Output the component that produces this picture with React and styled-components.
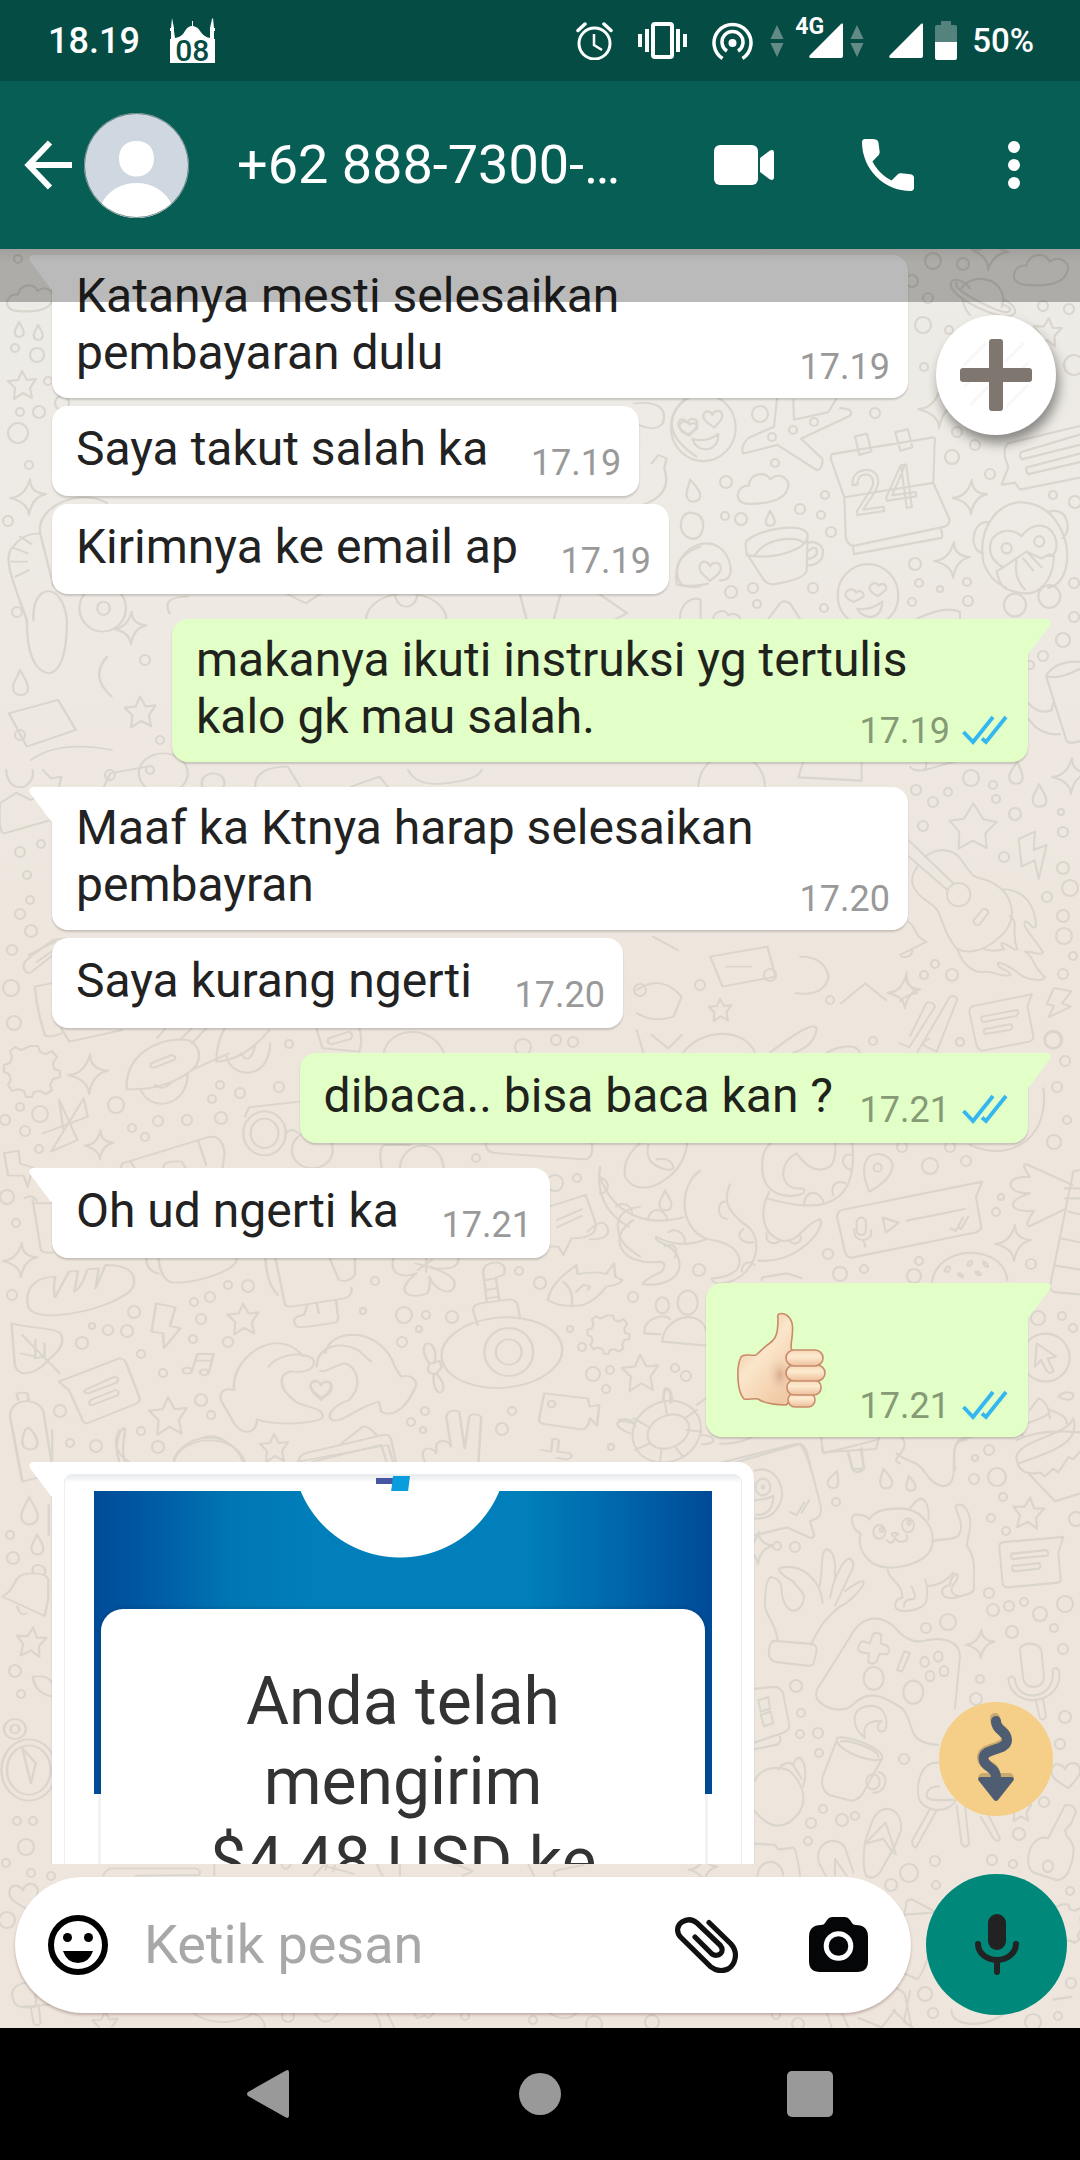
import React from "react";
import styled, { createGlobalStyle, css } from "styled-components";

const GlobalStyle = createGlobalStyle`
  *, *::before, *::after { box-sizing: border-box; }
  body { margin: 0; background: #000; font-family: Roboto, "Noto Sans", sans-serif; }
  button { border: 0; padding: 0; background: none; color: inherit; font: inherit; cursor: pointer; }
  svg { display: block; }
`;

const Screen = styled.div`
  display: flex;
  flex-direction: column;
  height: 100vh;
  overflow: hidden;
`;

/* ---------- status bar ---------- */

const StatusBar = styled.div`
  flex: none;
  display: flex;
  align-items: center;
  height: 81px;
  padding: 0 46px 0 48px;
  background: #054d44;
  color: #fff;
  font-weight: 500;
`;

const Clock = styled.time`
  font-size: 36px;
  line-height: 42px;
`;

const DateBadge = styled.div`
  position: relative;
  margin-left: 30px;
`;

const DateNumber = styled.span`
  position: absolute;
  left: 0;
  right: 0;
  bottom: 0;
  color: #054d44;
  font-size: 30px;
  line-height: 24px;
  text-align: center;
`;

const StatusIcons = styled.div`
  display: flex;
  align-items: center;
  gap: 25px;
  margin-left: auto;
`;

const Signals = styled.div`
  display: flex;
  align-items: center;
  margin-left: -8px;
`;

const Cell = styled.div`
  position: relative;
  margin: 0 7px 0 25px;
`;

const Network = styled.span`
  position: absolute;
  left: -14px;
  top: -8px;
  font-size: 23px;
  line-height: 24px;
  font-weight: 700;
`;

const Battery = styled.div`
  display: flex;
  align-items: center;
  gap: 15px;
  margin-left: -13px;
  font-size: 33px;
  line-height: 40px;
`;

/* ---------- header ---------- */

const Header = styled.header`
  flex: none;
  display: flex;
  align-items: center;
  height: 168px;
  padding: 0 52px 0 24px;
  background: #075e54;
  color: #fff;
`;

const Avatar = styled.div`
  margin-left: 12px;
`;

const Title = styled.h1`
  flex: 1;
  min-width: 0;
  margin: 0 0 0 48px;
  overflow: hidden;
  font-size: 54px;
  line-height: 64px;
  font-weight: 400;
  white-space: nowrap;
`;

const Actions = styled.div`
  display: flex;
  align-items: center;
  gap: 88px;
`;

/* ---------- chat ---------- */

const Chat = styled.div`
  position: relative;
  flex: 1;
  min-height: 0;
  display: flex;
  flex-direction: column;
  background: linear-gradient(#edece7, #eee9e3 350px, #eee6dd 750px);
`;

const Wallpaper = styled.svg`
  position: absolute;
  inset: 0;
  width: 100%;
  height: 100%;
`;

const Messages = styled.main`
  position: relative;
  flex: 1;
  min-height: 0;
  overflow: hidden;
  display: flex;
  flex-direction: column;
  padding: 6px 52px 0;
`;

const HeaderShade = styled.div`
  position: absolute;
  inset: 0 0 auto;
  height: 53px;
  background: linear-gradient(rgba(0, 0, 0, 0.32), rgba(0, 0, 0, 0.27) 14px);
`;

const Bubble = styled.article`
  position: relative;
  flex: none;
  display: grid;
  align-content: center;
  align-self: ${(p) => (p.$sent ? "flex-end" : "flex-start")};
  max-width: calc(100% - 120px);
  min-height: 90px;
  margin-top: ${(p) => (p.$follows ? "8px" : "25px")};
  padding: 12px ${(p) => (p.$sent ? "20px" : "18px")} 17px 24px;
  border-radius: 16px;
  background: ${(p) => (p.$sent ? "#e1ffc7" : "#fff")};
  color: ${(p) => (p.$sent ? "#1f231b" : "#222")};
  box-shadow: 0 2px 2px rgba(0, 0, 0, 0.16);
  ${(p) => p.$tail && (p.$sent ? "border-top-right-radius: 0;" : "border-top-left-radius: 0;")}
  &:first-child { margin-top: 0; }
`;

const Tail = styled.svg`
  position: absolute;
  top: 0;
  ${(p) => (p.$sent ? css`left: 100%; transform: scaleX(-1);` : css`right: 100%;`)}
`;

const Words = styled.p`
  grid-area: 1 / 1;
  margin: 0;
  padding-right: 16px;
  font-size: 48px;
  line-height: 57px;
  overflow-wrap: break-word;

  &::after {
    content: "";
    display: inline-block;
    width: ${(p) => (p.$sent ? "159px" : "117px")};
  }
`;

const Emoji = styled.div`
  grid-area: 1 / 1;
  padding-right: 172px;
`;

const Meta = styled.footer`
  grid-area: 1 / 1;
  place-self: end;
  display: flex;
  align-items: flex-end;
  gap: 12px;
  color: ${(p) => (p.$sent ? "#869a76" : "#999")};
  font-size: 36px;
  line-height: 28px;
`;

const PictureBubble = styled(Bubble)`
  display: block;
  width: 702px;
  padding: 12px;
`;

const Picture = styled.div`
  position: relative;
  overflow: hidden;
  padding: 16px 29px 0;
  border: 1px solid #eceeef;
  border-radius: 8px;
  background: linear-gradient(#e9ebed, #fff 8px);
`;

const Receipt = styled.div`
  position: relative;
  padding: 118px 7px 0;
  background:
    radial-gradient(circle 108px at calc(50% - 3px) -41px, #fff 107px, transparent 108px),
    linear-gradient(90deg, #004b98, #0060a8 12%, #0076b3 22%, #007fba 35%, #007fba 70%, #0068ac 84%, #004a97);
  background-size: 100% 303px;
  background-repeat: no-repeat;
`;

const Logo = styled.svg`
  position: absolute;
  left: 50%;
  top: 0;
  margin-left: -27px;
`;

const ReceiptCard = styled.div`
  padding: 53px 60px 40px;
  border-radius: 22px;
  background: #fff;
  box-shadow: 0 0 0 3px rgba(0, 0, 0, 0.05);
  color: #333;
  font-size: 66px;
  line-height: 80px;
  text-align: center;
`;

const Round = styled.button`
  display: grid;
  place-items: center;
  border-radius: 50%;
  width: ${(p) => p.$size}px;
  height: ${(p) => p.$size}px;
  background: ${(p) => p.$color};
`;

const AddButton = styled(Round)`
  position: absolute;
  right: 24px;
  top: 66px;
  box-shadow: 3px 8px 12px rgba(0, 0, 0, 0.42);
`;

const DownButton = styled(Round)`
  position: absolute;
  right: 27px;
  bottom: 212px;
`;

/* ---------- composer ---------- */

const Composer = styled.form`
  position: relative;
  flex: none;
  display: flex;
  align-items: center;
  gap: 15px;
  padding: 10px 13px 13px 15px;
`;

const Field = styled.div`
  flex: 1;
  min-width: 0;
  display: flex;
  align-items: center;
  height: 136px;
  padding: 0 43px 0 33px;
  border-radius: 68px;
  background: #fff;
  box-shadow: 0 2px 3px rgba(60, 0, 0, 0.25);
`;

const Input = styled.input`
  flex: 1;
  min-width: 0;
  height: 80px;
  margin: 0 24px 0 36px;
  padding: 0;
  border: 0;
  outline: 0;
  background: transparent;
  color: #222;
  font: 400 54px/64px Roboto, "Noto Sans", sans-serif;
  &::placeholder { color: #a8a8a8; opacity: 1; }
`;

const FieldActions = styled.div`
  display: flex;
  align-items: center;
  gap: 70px;
`;

/* ---------- system navigation ---------- */

const NavBar = styled.nav`
  flex: none;
  display: grid;
  grid-template-columns: repeat(3, 1fr);
  place-items: center;
  height: 132px;
  padding: 0 12.5%;
  background: #000;
`;

/* ---------- drawings ---------- */

const Arrows = () => (
  <svg width="14" height="32" viewBox="0 0 14 32" fill="#648a85">
    <path d="M7 0l6.500 14H.5zM7 32L.5 18h13z" />
  </svg>
);

const SignalIcon = () => (
  <svg width="34" height="35" viewBox="0 0 34 35" fill="#fff">
    <path d="M32.500.6Q34 0 34 1.500V33q0 2-2 2H1.500Q-.6 34.500.6 32.500z" />
  </svg>
);

const Ticks = () => (
  <svg width="46" height="30" viewBox="0 0 46 30" fill="none" stroke="#34b7f1" strokeWidth="3.800">
    <path d="M1.500 17L11 27 31 2M20 23.500l4 3.500L44 2" />
  </svg>
);

const ThumbsUp = () => (
  <svg width="106" height="125" viewBox="0 0 106 125" role="img" aria-label="👍🏻">
    <defs>
      <linearGradient id="palm" x1="0" y1=".2" x2=".6" y2="1">
        <stop offset="0" stopColor="#efc49e" />
        <stop offset=".45" stopColor="#fbe6ca" />
        <stop offset="1" stopColor="#f1cba7" />
      </linearGradient>
      <radialGradient id="fold">
        <stop offset="0" stopColor="#d9ab8c" />
        <stop offset="1" stopColor="#f6dcbf" stopOpacity="0" />
      </radialGradient>
      <linearGradient id="finger" x1="0" y1="0" x2="0" y2="1">
        <stop offset="0" stopColor="#f6d7b7" />
        <stop offset=".4" stopColor="#fdebd0" />
        <stop offset="1" stopColor="#edbf9b" />
      </linearGradient>
    </defs>
    <g stroke="#c98a69" strokeWidth="1.600">
      <path fill="url(#palm)" d="M49 19c5-2 11 2 13 9 2 9-1 16-1 25 6 8 8 48-5 57-10 0-21-1-28-6-6-1-8 1-14 0-7-7-8-32-3-42 3-4 9-1 15-2 6-5 8-8 14-12 7-5 8-12 8-25q-1-3 1-4z" />
      <ellipse cx="50" cy="80" rx="14" ry="20" fill="url(#fold)" stroke="none" />
      <rect x="58" y="98" width="27" height="14" rx="7" fill="url(#finger)" />
      <rect x="57" y="85" width="34" height="15" rx="7" fill="url(#finger)" />
      <rect x="56" y="70" width="39" height="16" rx="8" fill="url(#finger)" />
      <rect x="56" y="55" width="37" height="16" rx="8" fill="url(#finger)" />
    </g>
  </svg>
);

const STAR = "M0-14L5-5 14-6 8 3 10 13 1 8-8 14-7 3-14-4-4-5z";
const SPARKLE = "M2-18Q2-4 18-3Q4 0 1 18Q0 5-18 1Q-3 0 2-18z";
const HEART = "M0 12C-8 5-14 0-11-6S-2-9 0-4C3-10 11-9 12-3S6 7 0 12z";
const DROP = "M0-12C4-4 8 0 8 6S4 13 0 13-7 10-7 5-3-4 0-12z";
const GEAR = "M-4-22h8l2 6 6 2 6-3 5 6-4 6 1 6 6 2v6l-7 2-3 6 2 5-6 4-6-3-6 1-2 5h-6l-2-6-6-2-6 2-4-6 3-5-2-6-5-2v-7l6-2 2-6-2-6 5-4 6 3 5-2z";
const CLOUD = "M-18 12C-34 10-28-8-16-6-12-20 4-18 6-10 18-18 28-6 22 2 18 12 0 14-18 12z";

/* [shape, x, y, scale, rotation] */
const STAMPS = [
  [STAR, 22, 385, 1, 0], [SPARKLE, 28, 497, 1, 0], [CLOUD, 32, 300, .9, 0], [DROP, 19, 329, .6, 0], [DROP, 38, 332, .6, 0],
  [CLOUD, 1043, 272, 1.05, 0], [SPARKLE, 990, 252, 1, 10], [STAR, 1047, 332, 1, 8], [SPARKLE, 938, 408, 1.1, 0],
  [CLOUD, 765, 490, 1, -6], [DROP, 692, 490, .9, -10], [DROP, 770, 518, .6, 0], [SPARKLE, 970, 497, .95, 0], [SPARKLE, 952, 560, 1, 0],
  [SPARKLE, 1070, 776, 1, 0], [DROP, 1016, 772, .9, 6], [DROP, 1039, 795, .9, 0], [HEART, 710, 570, .9, 0], [HEART, 688, 426, .8, -8], [HEART, 713, 418, .8, -8],
  [GEAR, 34, 1068, 1, 0], [SPARKLE, 88, 1074, 1.1, 0], [SPARKLE, 99, 1145, .8, 0], [SPARKLE, 20, 1260, .95, 0],
  [STAR, 243, 1319, 1.1, 0], [STAR, 168, 1416, 1.35, 0], [STAR, 274, 1448, 1, 0], [HEART, 321, 1389, .9, 0],
  [GEAR, 610, 1332, .75, 0], [STAR, 640, 1373, 1.3, 0], [SPARKLE, 1013, 1243, 1, 0],
  [DROP, 29, 1510, 1.1, 0], [DROP, 37, 1544, .8, 0], [STAR, 31, 1642, 1.05, 8], [DROP, 834, 1479, .7, 20], [DROP, 885, 1478, .8, -10], [DROP, 910, 1483, .6, -10],
  [STAR, 1028, 1513, 1.1, 8], [SPARKLE, 980, 1644, .8, 0], [HEART, 1066, 1774, 1.2, -10], [STAR, 1020, 1810, .8, 0],
  [HEART, 24, 1895, 1.2, -12], [SPARKLE, 703, 1869, .8, 0], [GEAR, 1065, 1922, .8, 0], [STAR, 105, 2024, .9, 0],
  [SPARKLE, 757, 1548, .9, 0], [SPARKLE, 904, 992, .9, 0],
  [DROP, 20, 682, 1, 0], [STAR, 140, 712, 1.1, 0], [SPARKLE, 130, 628, .9, 0],
  [DROP, 665, 1200, .8, 0], [STAR, 720, 1010, .8, 0],
];

/* small rings scattered between the larger doodles: [x, y, r] */
const RINGS = [
  [18, 259, 4], [15, 348, 4], [37, 355, 7], [48, 381, 4], [20, 412, 4], [39, 412, 6], [18, 433, 10], [29, 465, 4], [8, 521, 5], [62, 403, 7], [17, 612, 5],
  [933, 261, 8], [963, 264, 6], [912, 281, 6], [928, 298, 5], [923, 325, 8], [949, 330, 4], [924, 367, 4], [1043, 306, 5], [1069, 309, 5], [1074, 365, 10],
  [760, 414, 8], [814, 422, 4], [793, 430, 4], [875, 413, 5], [772, 437, 4], [775, 463, 4], [957, 432, 5], [975, 445, 5], [952, 457, 7], [990, 474, 5],
  [726, 482, 6], [725, 516, 4], [741, 519, 6], [800, 509, 5], [825, 495, 4], [821, 515, 4], [831, 532, 5], [813, 588, 5], [753, 588, 5], [731, 592, 6], [757, 604, 4],
  [824, 608, 4], [915, 564, 6], [919, 583, 4], [940, 589, 3], [967, 582, 4], [968, 601, 5], [912, 602, 4], [1053, 495, 4], [1075, 502, 6], [1074, 583, 5], [1074, 617, 5], [1063, 640, 7], [1043, 656, 5], [1030, 665, 4],
  [20, 852, 5], [41, 844, 4], [27, 875, 4], [30, 900, 4], [20, 914, 5], [31, 931, 6], [12, 950, 5], [11, 988, 8], [14, 1023, 7],
  [116, 1105, 8], [40, 1114, 8], [20, 1107, 4], [5, 1120, 5], [25, 1131, 5], [39, 1149, 4], [132, 1128, 4], [145, 1137, 4], [158, 1121, 5], [187, 1120, 5], [221, 1118, 6],
  [212, 1099, 4], [220, 1085, 4], [240, 1093, 5], [279, 1087, 5], [289, 1044, 4], [523, 1047, 8], [556, 1040, 5], [573, 1042, 5], [555, 1183, 8], [577, 1178, 4], [476, 1158, 4], [7, 1197, 7], [16, 1223, 4],
  [12, 1295, 5], [82, 1343, 6], [92, 1326, 3], [108, 1330, 5], [127, 1331, 6], [134, 1312, 6], [141, 1354, 4], [163, 1373, 4], [194, 1302, 4], [210, 1297, 5], [228, 1285, 4],
  [248, 1286, 6], [201, 1319, 5], [193, 1339, 4], [228, 1342, 5], [201, 1400, 6], [60, 1411, 6], [70, 1443, 4], [96, 1446, 6], [158, 1447, 6], [141, 1431, 4], [211, 1415, 4],
  [375, 1281, 4], [363, 1311, 3], [404, 1315, 8], [426, 1315, 4], [452, 1317, 6], [402, 1342, 5], [419, 1329, 3], [519, 1271, 4], [540, 1283, 6], [633, 1297, 5], [699, 1270, 6], [570, 1329, 3],
  [582, 1347, 4], [593, 1374, 7], [610, 1370, 4], [606, 1389, 4], [675, 1368, 4], [686, 1376, 5], [512, 1411, 4], [502, 1429, 6], [425, 1411, 4], [411, 1422, 4], [423, 1430, 3], [611, 1447, 3],
  [873, 1041, 4], [960, 1042, 4], [1053, 1040, 8], [1065, 1061, 5], [1057, 1087, 5], [1067, 1120, 4], [1054, 1142, 7], [930, 1166, 8], [902, 1147, 5], [950, 1147, 5], [966, 1161, 5], [996, 1212, 4],
  [1001, 1197, 3], [828, 1254, 5], [840, 1274, 7], [864, 1269, 4], [914, 1276, 7], [919, 1261, 4], [1031, 1264, 5], [1038, 1318, 7], [1062, 1316, 4], [1073, 1328, 4],
  [975, 1458, 3], [989, 1450, 5], [974, 1479, 5], [997, 1477, 9], [1003, 1497, 4], [991, 1518, 4], [1006, 1531, 4], [1076, 1519, 7], [836, 1502, 4], [777, 1546, 4], [795, 1547, 5],
  [989, 1593, 5], [993, 1610, 6], [1009, 1606, 5], [1024, 1602, 4], [1040, 1614, 7], [1065, 1604, 8], [1054, 1628, 4], [1012, 1632, 6], [948, 1622, 8], [926, 1628, 5], [1063, 1649, 5], [980, 1679, 4], [976, 1699, 6],
  [1065, 1717, 6], [1060, 1744, 5], [796, 1686, 6], [801, 1713, 4], [800, 1734, 4], [818, 1733, 5], [819, 1753, 4], [904, 1759, 5], [823, 1809, 4], [811, 1823, 5], [842, 1820, 6], [855, 1816, 4], [808, 1841, 4],
  [1044, 1802, 5], [1019, 1834, 6], [935, 1861, 5], [992, 1860, 5], [1013, 1864, 4], [909, 1873, 9], [891, 1885, 6], [936, 1885, 4], [1070, 1891, 4], [925, 1994, 7], [933, 2013, 5], [1071, 1983, 5], [1058, 2016, 4], [1033, 2022, 8],
  [10, 1535, 4], [13, 1558, 6], [15, 1671, 6], [21, 1694, 4], [17, 1821, 4], [33, 1821, 4], [26, 1847, 8], [6, 1863, 4], [31, 1873, 4], [51, 1876, 4], [7, 1920, 8],
  [288, 2016, 6], [465, 2016, 4], [533, 2020, 4], [594, 2024, 8], [652, 2022, 7], [776, 2015, 4], [798, 2024, 6],
  [971, 778, 8], [993, 785, 4], [996, 799, 4], [916, 790, 5], [948, 792, 4], [933, 802, 5], [923, 826, 5], [1015, 814, 6], [1061, 812, 3], [1063, 832, 5], [1004, 857, 5], [1063, 868, 6], [1070, 888, 8],
  [1047, 897, 5], [1063, 916, 6], [1064, 936, 8], [1073, 956, 4], [1063, 974, 5], [935, 964, 4], [924, 975, 4], [952, 975, 6], [960, 1042, 4],
  [640, 990, 6], [700, 985, 5], [770, 975, 6], [830, 1000, 4], [110, 775, 5], [160, 740, 4], [145, 660, 5], [20, 735, 5], [150, 770, 4],
];

/* larger line drawings; each group carries the grid in which it was sketched */
const Doodles = () => (
  <Wallpaper viewBox="0 249 1080 1779" preserveAspectRatio="xMidYMin slice" aria-hidden="true">
    <g fill="none" stroke="#dad6cd" strokeWidth="2.200" strokeLinejoin="round" strokeLinecap="round">
      {STAMPS.map(([d, x, y, s, r], i) => (
        <path key={i} d={d} transform={`translate(${x} ${y}) rotate(${r}) scale(${s})`} vectorEffect="non-scaling-stroke" />
      ))}
      {RINGS.map(([x, y, r], i) => <circle key={i} cx={x} cy={y} r={r} />)}

      {/* planet, plane, calendar, cup, monkey */}
      <g transform="translate(640 240) scale(.3333 .3444)" strokeWidth="6.500">
        <path d="M965 140C985 105 1060 100 1085 150Q1095 175 1085 195M968 170Q972 200 990 218M990 140C960 105 920 110 935 140C960 180 1060 220 1100 222C1140 220 1130 190 1090 172M950 125C930 140 1060 205 1100 210C1120 205 1110 195 1085 185" />
        <circle cx="190" cy="545" r="97" /><circle cx="684" cy="1032" r="91" />
        <path d="M157 577Q200 590 235 563Q235 605 195 608Q165 605 157 577zM652 1070Q690 1078 727 1050Q725 1092 690 1095Q660 1090 652 1070zM117 540c10-20 28-14 32-4 12-10 26 0 22 12l-28 17q-24-8-26-25zM616 1028c10-20 28-14 32-4 12-10 26 0 22 12l-28 15q-24-8-26-23zM688 1010c10-20 24-14 28-6 12-12 26-2 22 12l-24 18q-22-8-26-24z" />
        <path d="M411 460L402 542 325 575Q300 600 310 620L412 595 530 668Q550 665 547 635L483 577 630 510Q645 490 600 488M460 465L462 522 565 500 590 460" />
        <path d="M575 622L880 573Q888 575 884 590L880 705 928 810Q930 825 915 832L640 888Q620 885 617 860L613 747 572 635zM613 747L880 705M638 888L642 912 905 865Q910 850 900 836M645 570l36-8 13 52-36 10zM766 558l38-8 13 52-36 10z" />
        <text x="642" y="800" transform="rotate(-8 642 800)" fontFamily="Roboto" fontSize="175" strokeWidth="6">24</text>
        <path d="M317 885C310 850 490 810 503 855L500 960Q495 985 400 1000Q380 1000 370 985L320 910zM345 915C380 860 480 860 490 880M320 915C400 930 500 900 503 860M503 880C530 870 560 890 545 925Q530 945 502 945M503 905c15-15 28-15 28 0s-20 22-29 20" />
        <path d="M110 1000C90 880 250 830 272 950Q275 990 240 988M110 1000Q150 1010 205 998M122 830Q125 790 155 792 190 795 190 830 185 870 155 868 125 860 122 830z" />
        <path d="M1030 935C1010 820 1090 755 1150 762C1250 770 1290 870 1280 940Q1270 1000 1225 1010M1030 935Q1050 990 1098 1008M1045 820C1000 810 980 900 1030 910M1225 790C1280 770 1300 840 1268 865M1050 895C1050 845 1110 830 1145 860C1190 800 1260 835 1248 900Q1240 920 1230 912L1205 925 1160 905 1090 950Q1050 930 1050 895zM1090 950l-20 12q10 50 40 55 60 20 90-5 40-30 42-95l-22 0M1130 930q-10 50 25 85M1150 925l30 35M1165 910l40 40" />
        <circle cx="1100" cy="895" r="15" /><circle cx="1198" cy="875" r="15" />
        <ellipse cx="1125" cy="1060" rx="33" ry="33" /><ellipse cx="1228" cy="1035" rx="33" ry="33" />
        <path d="M1320 540L1105 590Q1090 600 1095 630L1105 660 1085 710 1125 705 1140 725 1320 690M1320 565L1145 615Q1135 625 1145 637L1320 595M1320 620L1160 660Q1155 672 1165 680L1320 645" />
        <path d="M1218 1265L1280 1455Q1290 1465 1320 1455M1218 1265Q1250 1220 1320 1225M1218 1265Q1250 1280 1320 1245M1165 1345Q1200 1380 1235 1365L1240 1345M1165 1390Q1200 1440 1260 1435" />
        <path d="M120 1100c0-50 40-65 62-55v55M220 1100c0-25 40-30 45-10 15-10 35 0 35 10M385 1100l35-45q10-12 30 0l30 45M830 1100q90-40 130-20v20M475 1560l15-45M475 1560l190 10 0-50" />
        <circle cx="275" cy="1590" r="100" />
      </g>

      {/* left edge of the upper chat */}
      <g transform="translate(0 240) scale(.4464 .3333)" strokeWidth="5.500">
        <path d="M90 880C80 800 180 740 240 790M60 1140C40 1060 0 950 30 920Q50 880 90 880L120 1040M75 1140C70 1030 140 1020 150 1140M32 925l30 15M25 965h35M35 1010l30-20M45 890l25 22" />
        <ellipse cx="230" cy="1105" rx="52" ry="70" /><ellipse cx="232" cy="1105" rx="14" ry="20" />
        <path d="M60 1140Q60 1290 110 1300 150 1290 150 1140M20 1420l110-40 40 90-110 50zM240 1250q-40 60 10 120M70 1560q60-60 180-30" />
        <path d="M380 1120q-20-50 40-50M640 1060l45 30 35-30M1165 1065l15 75h60l15-75M1340 1060l65 60-30 20" />
        <ellipse cx="910" cy="1140" rx="90" ry="80" /><ellipse cx="910" cy="1060" rx="25" ry="40" />
        <path d="M1420 490q80-10 65 60-20 30-60 0M1540 470q-80 90 20 180M1460 670l15-25 18 10-5 30q20 80-50 110M1568 920q-60 30-50 90 5 40 50 30" />
      </g>

      {/* guitar, lightning, note card */}
      <g transform="translate(900 760) scale(.3333)" strokeWidth="6">
        <path d="M30 20q10 15 45 10L180 0M75 0q10 20-5 32M220 130l30 48 40 8-34 34 4 44-42-22-42 24 2-52-30-32 44-6z" />
        <path d="M356 237l49-22-4 55 39-15-24 102-12-56-39 19zM25 240L162 372M25 288L142 390M78 288C120 260 160 270 180 295L215 342Q225 352 245 356C330 375 370 470 300 530C240 590 180 575 170 565C120 510 130 450 90 430C20 385 30 350 55 315" />
        <circle cx="176" cy="404" r="35" />
        <path d="M220 482l28-34q14-4 18 10l-28 36q-14 4-18-12zM310 388C370 390 405 430 408 498 400 515 385 480 375 485 365 500 400 530 430 578 420 590 390 570 375 575 405 590 390 610 435 652 430 665 390 660 370 650 340 630 320 610 295 608 285 625 330 630 332 645 300 655 290 630 240 636 200 630 180 590 172 568M330 468C360 490 330 510 352 568 340 575 320 545 305 550 300 560 315 565 312 568 290 575 260 572 248 565" />
        <path d="M25 485C50 500 40 530 80 545L0 585M5 590q30 5 33-20M20 635q-5 40 32 64-35 5-52 25M0 850l28 12 77-122q-4-14-25-12l-50 100M50 880L150 710q16-6 22 8L110 875l-38-18q-6-14 16-20M462 684l52 10-28 36 26 10-66 32 16-34-22-6z" />
        <path d="M220 738L396 703 382 738 400 828Q402 840 388 845L250 872Q236 872 230 858L208 755Q208 742 220 738zM245 770l106-20q8 10-2 18l-100 18q-8-8-4-16zM253 808l80-16q8 10-2 18l-76 12q-6-6-2-14z" />
        <circle cx="460" cy="839" r="27" />
      </g>

      {/* boat, rocket, glasses */}
      <g transform="translate(0 770) scale(.4082 .3333)" strokeWidth="5.700">
        <path d="M0 100L40 68 75 90 125 55M0 100Q-5 190 10 190L125 150M15 0Q20 60 60 50 85 30 80 0M105 0l20 25 25-5-5 30M255 50l15-40 90-20" />
        <circle cx="400" cy="10" r="60" /><circle cx="522" cy="38" r="28" />
        <path d="M625 50q0-60 80-60l30 60M860 50l70-30 20 30M1000 0q20 50 90 40 80-10 90-40" />
        <path d="M125 640L85 650Q90 720 110 795 120 805 150 790M150 775L170 815 300 780M60 600Q50 580 80 555L130 510 160 505Q170 520 140 545L75 608q-10 4-15-8zM70 555l65-40M90 575l60-50" />
        <path d="M310 950C310 860 380 800 460 810C500 830 490 880 470 900C430 940 380 960 310 958zM370 880l50-25q12 2 8 14l-50 24q-12 0-8-13zM460 910C460 1010 370 1030 345 960M380 945q20 20 40-8M470 900L560 850M405 775L385 805M470 775l-30 35M505 775L470 820M550 775Q530 820 530 875 600 870 660 780M555 860C570 930 660 930 662 820M590 850q20 40 35-20M775 775l15 60 90 10q10-30 0-70M805 805l50-20q12 6 4 22l-48 16q-12-4-6-18zM940 850C950 770 1060 760 1088 850" />
        <path d="M105 1090L215 1040 205 985 125 1145 190 1110 145 990 155 1080M10 1150l35-8 5 40 30 10-12 60-10-35-38 0z" />
        <path d="M295 1195L300 1180 500 1105Q545 1085 550 1150L545 1195M320 1175l10 20M485 1110l20 75M735 995L610 1012 600 1040M400 1195q0-25 45-20l10 20" />
        <ellipse cx="648" cy="1090" rx="52" ry="66" /><ellipse cx="648" cy="1090" rx="34" ry="44" />
        <ellipse cx="765" cy="1140" rx="50" ry="55" /><path d="M700 1090q15-20 30 0M935 1195q-10-70 10-70h60M980 1195c0-80 100-100 107 0M1190 1120q0 30 30 30l210 18q25 0 20-48" />
        <path d="M80 1290l20 150q5 10 30 8M80 1300h48M60 1285q20-15 30 8M1345 1310l90-35 20 70q20 60-55 60l-20 50-12-25-20 0M1365 1350l60-32M1365 1372l60-34M1440 1385q40-50 50-5 0 30-45 28M1470 1190q-15 120 70 180M1568 1310q-70 10-50 90 10 30 50 60" />
        <path d="M1560 660q60-50 110 20l-20 60q-50 20-90-10M1740 560l140-30 20 90-130 30zM1780 590h60M1960 560q60 0 70 60-10 60-80 50M1600 500l60 40M2060 700l60-60 50 50" />
      </g>

      {/* octopus, voice note, burger, turtle */}
      <g transform="translate(600 1030) scale(.3333)" strokeWidth="6.500">
        <path d="M0 440C40 560 150 590 250 562M100 570C20 620 60 710 180 695Q205 700 185 725Q130 750 128 762C180 770 250 750 237 690C225 640 160 640 168 620Q240 660 320 627M300 423C240 460 230 590 320 627C420 640 430 690 410 720Q380 745 335 745Q340 770 390 755C470 730 500 620 430 580C380 540 370 510 390 463M75 440C65 380 120 340 120 340M75 440Q100 485 160 468 250 430 262 340M487 400C480 500 570 510 610 490Q620 475 600 475C540 480 530 400 590 370Q640 440 690 410 710 390 705 340M500 505C620 540 780 560 757 340M508 485C480 540 480 610 545 632 600 640 610 580 660 568 680 590 600 700 475 692M487 400q0-40 25-60M145 345q-15 60 60 75 20-5 15-10-10-30-50-22" />
        <path d="M0 490c30 0 30-40 5-45M48 530c10-15 50-10 48 25M143 570c5-40 50-40 60 0M205 607c20-15 50 0 50 30M195 648c30-10 40 10 30 35M375 515c-25 0-25 50 5 52M430 597c-25 20-5 45 30 40M425 725c0-30 30-35 38-20M612 527c0-50 50-50 60-5M700 495c-10-30 10-45 35-35M755 375c-35-10-35 40 0 45M500 610c-5 35 30 35 42 20M570 635c20 15 40-5 30-20" />
        <path d="M808 485C780 420 790 370 835 372C900 380 890 440 808 485z" /><circle cx="833" cy="413" r="12" />
        <path d="M725 540L1147 455 1128 500 1144 595 1130 607 755 683Q740 683 735 665L711 560Q712 545 725 540zM848 563l48 15-38 30zM920 572L1095 537M1052 595l15 8 22-40M1075 590l8 8 22-38M763 598c-5 45 60 40 50 2M790 630l6 20" />
        <rect x="770" y="563" width="28" height="52" rx="14" />
        <path d="M1418 465L1280 403Q1260 400 1290 440 1230 440 1232 465 1235 490 1290 490 1230 510 1240 530 1250 545 1302 543 1270 590 1290 588L1395 538M1420 425l20-5M1420 425L1350 770Q1350 785 1370 787L1440 793M1405 545l35 8M1380 625l60 12M1367 707l73 12M1395 475h45M1395 505h45M995 759C1010 640 1210 640 1222 750" />
        <path d="M1033 722q10-20 18-8-5 18-18 8zM1075 730q15 0 14 12-14-2-14-12zM1102 706q5-18 15-12 0 16-15 12zM1127 725q15 0 16 10-16 2-16-10zM1150 695q15 4 14 16-14-2-14-16z" />
        <path d="M133 910C130 860 200 850 210 868M133 910l48 3M187 935C190 860 300 830 320 905M187 935L318 947M485 750Q485 740 500 740L560 730 605 745" />
        <ellipse cx="187" cy="826" rx="20" ry="24" /><ellipse cx="263" cy="818" rx="30" ry="36" />
        <ellipse cx="200" cy="1205" rx="105" ry="90" transform="rotate(-25 200 1205)" /><ellipse cx="205" cy="1205" rx="65" ry="48" transform="rotate(-25 205 1205)" />
        <path d="M190 1115c0-50 28-50 26 0M100 1180c-60-20-65 10-10 30M300 1215c50 0 55 30 5 28M290 1125l28-20M145 1190l-45-25M150 1240l-45 20M185 1255l-5 40M225 1250l25 32M260 1200l45 5M255 1165l35-25M200 1150l-5-30" />
        <circle cx="1337" cy="983" r="72" /><path d="M1310 940l58 40-25 6 18 38q-10 10-20 0l-18-34-18 20z" />
        <path d="M1290 1140l25-35q30 10 35 60M1270 1220C1230 1170 1340 1180 1350 1140 1410 1160 1400 1180 1400 1180M1250 1290C1240 1230 1400 1220 1420 1165 1440 1230 1380 1260 1255 1300M1375 1100q20-20 45-8 0 30-45 8M663 1222l5 45 160-10 10-35M742 1262l15 55h35l-10-60M905 1222C940 1260 860 1290 900 1300M1065 1320c-10-90 10-100 50-98M380 1305L600 1242Q625 1280 633 1320" />
        <path d="M110 0l20 68M155 15l50 40 40-40M250 68c50-70 180-80 215 0M510 68Q650-40 650 0 640 50 580 68M680 68c50-25 90-25 100 0M1330 175c20 130-80 230-220 170" />
      </g>

      {/* bread, hands, bauble, leaf */}
      <g transform="translate(0 1200) scale(.4592 .3333)" strokeWidth="5.500">
        <path d="M60 310C55 250 90 230 120 230Q115 270 120 292L150 215 170 213 162 275Q180 260 190 208L215 205 208 265 230 195C270 195 300 210 290 260C270 320 60 390 60 310z" />
        <path d="M340 310L382 322 370 378 393 385 357 445 355 400 330 395zM25 370C80 390 130 380 135 410C140 450 110 470 100 488 70 530 35 530 32 490zM48 405L130 520M45 460l32 10 0-50M75 475l22-5V430" />
        <path d="M128 545L260 475Q270 475 275 490L303 590Q308 605 295 612L190 670Q180 670 178 655L150 570zM185 570l65-40q12 4 4 18l-62 32q-12 0-7-10zM197 600l55-30q10 4 4 16l-56 30q-10-2-3-16z" />
        <path d="M430 462h35l-10 55M430 462l-12 50M430 482h32" /><ellipse cx="408" cy="512" rx="10" ry="9" /><ellipse cx="445" cy="517" rx="9" ry="9" />
        <path d="M510 570C480 560 475 590 485 610L510 670C530 710 560 700 560 658 600 680 700 670 703 650C705 620 650 620 640 600 600 560 610 510 640 515 680 520 690 490 680 475 650 450 600 470 585 500M510 570C500 480 600 370 660 468M690 500C690 440 740 420 780 450L808 485M708 460C720 380 830 380 860 500L873 530C900 520 910 550 905 560 880 640 850 650 830 635L825 605C780 620 750 665 725 662 710 650 720 620 760 600 790 560 780 500 750 490 720 500 710 520 697 512M700 592C680 575 670 560 680 548 690 540 697 548 699 555 705 540 722 542 721 560 720 575 705 590 700 592z" />
        <ellipse cx="1093" cy="458" rx="132" ry="105" transform="rotate(-10 1093 458)" /><ellipse cx="1108" cy="456" rx="53" ry="72" /><ellipse cx="1108" cy="456" rx="28" ry="38" />
        <path d="M1040 375L1030 330Q1030 315 1045 310L1110 298Q1125 300 1127 315L1132 350M1060 305L1052 215Q1055 185 1085 188 1105 195 1097 225L1080 232 1087 300M1058 240l20-5M1058 270l22-5M1062 295l22-5M935 490C910 440 930 420 940 435 955 460 945 490 945 490M950 520C975 560 965 580 955 577 940 560 945 520 945 520M935 492q-10 30 15 30l12-20-5-20z" />
        <path d="M1193 300C1200 240 1250 205 1255 195L1258 222Q1300 212 1320 222L1337 190 1340 230 1355 240Q1350 255 1320 260 1300 300 1270 315 1220 325 1193 300zM1227 245q25 30 17 75M1255 275l15-20 15 5-5 10" />
        <path d="M1185 580L1280 595 1284 620 1305 615 1300 677 1285 655Q1280 690 1265 688L1185 672Q1170 670 1175 650zM1193 612a8 10 0 1 0 16 0a8 10 0 1 0-16 0" />
        <path d="M318 175Q320 215 345 220M345 175Q350 240 375 248C430 250 520 210 515 175M578 175Q580 250 605 285M600 175L620 310Q620 320 635 320L750 295Q770 285 765 262M718 175l20 65q20 10 35-15V175M670 312L662 345Q630 350 645 378 650 385 680 378L730 368Q740 360 735 340L732 300M690 310l4 30M857 175c-10 50 20 60 50 45C850 280 900 300 930 280 940 260 935 240 935 230 950 280 990 290 990 250 990 230 960 210 940 205 990 210 1000 195 998 175M905 190l45 15M928 175v40M910 210l30-30" />
        <path d="M40 600L36 582Q40 575 60 580L63 605M22 650C20 590 90 590 95 640L112 786M22 650L48 840M55 690C45 720 45 750 68 748 88 745 85 710 62 682zM260 786c-15-60 5-110 12-100 0 30-10 60 0 100M378 780C400 700 500 680 530 786M440 715q30-20 60 20M650 786Q650 760 680 755L835 705Q850 700 853 725L862 786M680 786L830 735 842 786M740 735L790 680Q800 675 820 705M925 786C910 740 940 735 950 760V740C950 715 980 720 982 740L972 650Q975 625 1000 635L1012 745 1022 650Q1030 635 1048 650L1042 786" />
        <path d="M1178 750l22 5 3-37q10-5 14 5l-3 32 27 5q10 10-5 18l-24-4M1348 660q30-10 35 20M1445 600q0-60 15-20v30" />
      </g>

      {/* bell, compass */}
      <g transform="translate(0 1430) scale(.4974 .3333)" strokeWidth="5">
        <path d="M5 500C40 470 20 430 65 430Q95 430 97 450V505L90 558zM35 530q5 30 18 20M66 425c-5-30 30-25 24 5M66 740q50-10 40 60Q70 790 66 740zM98 225v90M45 955L62 1060 72 1000z" />
        <ellipse cx="58" cy="1020" rx="55" ry="92" /><ellipse cx="58" cy="1020" rx="44" ry="74" /><ellipse cx="30" cy="897" rx="22" ry="30" /><ellipse cx="30" cy="897" rx="9" ry="13" />
        <path d="M25 0l20 155 30-12M105 0l0 90M240 0q-20 60 20 96M350 95C360 20 470 0 492 95M600 95L780 45 790 95" />
      </g>

      {/* message sticker, cat, hand, controller, mug, chair, key */}
      <g transform="translate(720 1440) scale(.3333 .3827)" strokeWidth="6">
        <path d="M0 60L230 10Q250 8 260 30L303 175Q305 195 290 205L270 212 283 250Q280 258 270 255L200 228 100 250M105 80C170 60 210 140 170 180 150 210 105 205 105 205M105 158q40-5 55-12 0 50-50 50M210 188l20 8 22-32M245 190l22-32" />
        <circle cx="129" cy="123" r="22" /><circle cx="129" cy="123" r="4" />
        <path d="M448 208C470 170 560 180 568 182C600 190 640 220 638 262C640 320 540 335 500 333C440 330 410 280 422 245C390 230 390 190 410 195Q440 195 448 208M568 182Q600 140 615 160 630 180 625 208M638 265C660 255 700 265 715 250C740 220 700 180 708 172 730 160 755 190 750 230L740 275C770 310 760 340 762 390 760 400 740 405 715 410 680 420 660 405 668 390 675 380 690 380 690 380 690 360 705 350 712 350 720 370 690 375 695 395 700 410 725 408 725 408M622 382Q670 380 700 347M503 340C510 370 545 370 548 412 520 415 520 445 540 445 570 450 620 440 620 415Q625 390 616 365M575 383Q590 410 582 415 550 415 552 435M500 262q15 15 25-5 15 15 35 5 5-12 0-12M515 245q5 15 20 0-10-5-20 0z" />
        <circle cx="478" cy="240" r="18" /><circle cx="564" cy="223" r="18" /><circle cx="484" cy="235" r="5" /><circle cx="567" cy="216" r="5" />
        <path d="M173 525C170 480 130 450 135 430Q135 360 155 358 185 365 185 390C185 430 210 450 225 445 250 440 255 410 250 402L220 370Q170 345 178 335C240 320 300 360 308 425M298 385C310 340 300 290 320 285 350 290 345 340 345 360L330 412M345 365Q370 310 390 310 410 320 390 350L345 433M375 395Q420 365 430 370C440 380 380 430 360 435 310 470 300 490 272 535M165 525L275 533Q290 535 290 550L282 580Q280 590 265 590L165 580Q140 570 148 545 150 525 165 525z" />
        <path d="M300 640L390 515C430 450 490 460 525 490C560 530 600 530 625 522 680 515 720 530 720 565L705 700M300 640C280 660 290 680 300 685 330 710 380 710 400 690 450 650 490 670 545 700 590 740 550 790 655 797M415 540q5-15 15-14l20 5 8-22q10-10 26 0l-2 22 20 7q10 10 0 22l-23-2-10 22q-10 8-24 0l2-22-24-4q-12-6-8-14zM553 552l17 5-24 48-15-4z" />
        <circle cx="461" cy="623" r="30" /><circle cx="580" cy="659" r="30" /><circle cx="614" cy="580" r="13" /><circle cx="655" cy="566" r="13" /><circle cx="630" cy="617" r="13" /><circle cx="672" cy="604" r="13" />
        <path d="M838 280Q838 268 850 267L1030 253 1015 295 1022 365Q1022 372 1010 373L865 385Q850 385 848 375zM875 297L980 288Q988 295 982 302L878 311Q868 304 875 297zM878 329L958 322Q965 330 958 336L882 343Q872 336 878 329z" />
        <path d="M900 550C895 530 960 520 965 555L972 620Q970 645 940 645 915 645 910 625zM865 625C880 710 1030 690 1018 605Q1010 590 998 600C1010 680 890 690 885 625Q875 610 865 625M948 682l12 45q10 8 18-4l-8-42" />
        <path d="M350 785L308 880Q300 915 330 928L390 942Q420 945 440 905M350 785C340 760 490 800 487 830 480 850 360 820 350 785zM362 788C380 780 480 810 475 828M485 835L440 905M475 868C510 870 500 925 460 922M435 778C390 750 390 690 460 695 500 700 505 740 495 758 480 770 460 750 485 735 430 730 430 760 435 778z" /><circle cx="459" cy="893" r="20" />
        <path d="M655 843C600 840 590 900 595 930 600 970 690 985 710 935M700 940Q620 945 620 930 620 905 657 905M628 967L578 1045q-5 15 10 20l62-97M710 955L725 1055q10 15 22 0L735 955M782 985L820 1040q15 15 20 0L805 980" />
        <path d="M435 1050L455 1000C480 940 550 960 543 1020L525 1060 480 1130Q460 1150 440 1140 425 1120 435 1050M435 1055L497 1000 528 1082M435 1055L490 1042 520 1080M297 1105C280 1050 350 1030 375 1065L400 1130M297 1105l20 33M345 1138V1095L380 1138" />
        <path d="M1035 955Q1060 950 1068 970L1055 1000 1035 1020 1040 1035C1070 1060 1060 1080 1058 1095L1045 1130Q1030 1150 1010 1150L940 1130C910 1110 930 1060 945 1050Q960 1035 985 1040z" /><circle cx="984" cy="1114" r="15" />
        <path d="M105 650L160 645Q185 645 190 665L208 745Q208 760 190 765L105 790M105 808L175 795Q185 785 180 775M115 680l30-8 5 30-28 8zM122 718l30-8 8 30-28 8zM105 890C120 850 200 850 215 870C250 900 260 940 240 970 200 1020 150 1020 105 970M175 862C190 840 215 840 220 850L245 885M220 850C225 820 260 820 255 885L250 905M105 1055L165 1058 175 1070 220 1065Q230 1070 240 1138M112 1138c5-45 70-50 78 0" />
        <path d="M560 1205L575 1200 640 1230M560 1205L552 1245M640 1235L555 1240M555 1395L590 1408Q600 1410 625 1350M570 1440L552 1520L578 1535M520 1490L575 1535 555 1450Q545 1435 520 1430M695 1490C690 1530 790 1540 850 1500M1000 1462L1055 1455M320 1495l15 40M365 1495l20 40M525 1490l-40 45-70-25" />
        <path d="M890 0Q960-30 1080-20M890 40C890 90 930 90 960 85L975 95 1000 75 1015 85 1045 45 1060 50 1080 30M928 90L1005 160 1080 140M0 10Q60 10 100-10M303-10L310 35 470 0M385 30l15 50q15 10 32-5L425 20M530 35C560 60 590 50 615 85 650 130 690 130 700 95 705 40 690 0 740 0" />
      </g>

      {/* strip around the message box */}
      <g transform="translate(0 1840) scale(.3827 .3333)" strokeWidth="5.500">
        <path d="M270 107Q275 90 290 85L510 85Q528 90 520 105L355 107M560 72v35M735 72q10 30 25 0M820 107l25-30 80 25M850 90l5-15M870 95l5-18M985 72q10 30 15 35M1045 72v35M1190 72l45 22-25 13M1380 72l15 35M1450 107Q1440 95 1460 90L1525 75M35 480C20 440 60 420 90 432L95 500Q40 510 35 480M80 500l8 50q10 12 18 0l-5-55M55 500l120-10M500 515C560 570 640 540 660 520 690 530 695 560 690 562M820 515q30 60 65 0M975 515q15 10 20 48M1010 515l20 48M1080 515l10 20 20-8 10 8 15-18M1430 515q50 40 80 0" />
      </g>
    </g>
  </Wallpaper>
);

const MESSAGES = [
  { text: "Katanya mesti selesaikan pembayaran dulu", time: "17.19", tail: true },
  { text: "Saya takut salah ka", time: "17.19", follows: true },
  { text: "Kirimnya ke email ap", time: "17.19", follows: true },
  { text: "makanya ikuti instruksi yg tertulis kalo gk mau salah.", time: "17.19", sent: true, tail: true },
  { text: "Maaf ka Ktnya harap selesaikan pembayran", time: "17.20", tail: true },
  { text: "Saya kurang ngerti", time: "17.20", follows: true },
  { text: "dibaca.. bisa baca kan ?", time: "17.21", sent: true, tail: true },
  { text: "Oh ud ngerti ka", time: "17.21", tail: true },
  { emoji: true, time: "17.21", sent: true, tail: true },
];

const BubbleTail = ({ sent }) => (
  <Tail $sent={sent} width="23" height="34" viewBox="0 0 23 34" fill={sent ? "#e1ffc7" : "#fff"} aria-hidden="true">
    <path d="M23 0H4Q-1 1 1 6L22 34h1z" />
  </Tail>
);

const Message = ({ text, emoji, time, sent, tail, follows }) => (
  <Bubble $sent={sent} $tail={tail} $follows={follows}>
    {tail && <BubbleTail sent={sent} />}
    {emoji ? <Emoji><ThumbsUp /></Emoji> : <Words $sent={sent}>{text}</Words>}
    <Meta $sent={sent}>
      <time>{time}</time>
      {sent && <Ticks />}
    </Meta>
  </Bubble>
);

export default function App() {
  return (
    <Screen>
      <GlobalStyle />
      <StatusBar>
        <Clock>18.19</Clock>
        <DateBadge>
          <svg width="45" height="45" viewBox="0 0 45 45" fill="#fff">
            <path d="M0 45V21h1v-8h-1v-3h1L2 0l2 10v3l1 7q7-1 10-7 3-5 7-5V3h1v5q5 1 7 5 4 6 10 7V10L42 1l1-1 1 10h1v3h-1v8h1v24z" />
          </svg>
          <DateNumber>08</DateNumber>
        </DateBadge>
        <StatusIcons>
          <svg width="37" height="38" viewBox="0 0 37 38" fill="none" stroke="#fff" strokeWidth="3">
            <circle cx="18.500" cy="21.500" r="15.500" />
            <path d="M2 8.500L9 2M35 8.500L28 2" strokeWidth="3.500" strokeLinecap="round" />
            <path d="M18 12v11l8 5" strokeWidth="2.500" />
          </svg>
          <svg width="49" height="37" viewBox="0 0 49 37" fill="#fff">
            <rect x="15" y="2" width="19" height="33" rx="2" fill="none" stroke="#fff" strokeWidth="4" />
            <path d="M7 7h4v23H7zM0 12h4v13H0zM38 7h4v23h-4zM45 12h4v13h-4z" />
          </svg>
          <svg width="41" height="38" viewBox="0 0 41 38" fill="none" stroke="#fff" strokeWidth="3.500">
            <circle cx="20.500" cy="21" r="4" fill="#fff" stroke="none" />
            <path d="M10.500 36.500A18.500 18.500 0 1 1 30.500 36.500M15 29A10.500 10.500 0 1 1 26 29" />
          </svg>
          <Signals>
            <Arrows />
            <Cell><SignalIcon /><Network>4G</Network></Cell>
            <Arrows />
          </Signals>
          <SignalIcon />
          <Battery>
            <svg width="22" height="39" viewBox="0 0 22 39" fill="#53837c">
              <path d="M6 0h10v4h4q2 0 2 2v16H0V6q0-2 2-2h4z" />
              <path fill="#fff" d="M0 21h22v16q0 2-2 2H2q-2 0-2-2z" />
            </svg>
            50%
          </Battery>
        </StatusIcons>
      </StatusBar>

      <Header>
        <button aria-label="Kembali">
          <svg width="48" height="50" viewBox="0 0 48 50" fill="none" stroke="#fff" strokeWidth="6">
            <path d="M48 25H5M26 2.500L4.500 25 26 47.500" />
          </svg>
        </button>
        <Avatar>
          <svg width="105" height="105" viewBox="0 0 105 105" role="img" aria-label="Foto profil">
            <clipPath id="face"><circle cx="52.500" cy="52.500" r="52.500" /></clipPath>
            <g clipPath="url(#face)">
              <path fill="#cfd8e0" d="M0 0h105v105H0z" />
              <path fill="#fff" d="M52.500 28c11 0 17.500 7 17.500 17.500S63 63.500 52.500 63.500 35 56 35 45.500 41.500 28 52.500 28zM17 92c6-14 20-22 35.500-22S82 78 88 92v13H17z" />
            </g>
            <circle cx="52.500" cy="52.500" r="52" fill="none" stroke="#24463f" strokeOpacity=".6" />
          </svg>
        </Avatar>
        <Title>+62 888-7300-…</Title>
        <Actions>
          <button aria-label="Panggilan video">
            <svg width="60" height="40" viewBox="0 0 60 40" fill="#fff">
              <rect width="44" height="40" rx="6" />
              <path d="M46 13L56 5.500q4-1.500 4 2v25q0 3.500-4 2L46 27z" />
            </svg>
          </button>
          <button aria-label="Telepon">
            <svg width="52" height="52" viewBox="3 3 18 18" fill="#fff">
              <path d="M6.540 3C7.700 3 8.500 3.300 8.700 4.200L9.100 7.300C9.150 8 9 8.300 8.700 8.600L6.620 10.790c1.440 2.830 3.760 5.140 6.590 6.590l2.200-2.200c.28-.28.7-.37 1.100-.3l3.300.3c.8.150 1.190.6 1.190 1.200V20c0 .6-.5 1-1 1C10.600 21 3 13.400 3 4c0-.6.500-1 1-1z" />
            </svg>
          </button>
          <button aria-label="Opsi lainnya">
            <svg width="26" height="48" viewBox="0 0 26 48" fill="#fff">
              <circle cx="12" cy="6" r="6" /><circle cx="12" cy="24" r="6" /><circle cx="12" cy="42" r="6" />
            </svg>
          </button>
        </Actions>
      </Header>

      <Chat>
        <Doodles />
        <Messages>
          {MESSAGES.map((m, i) => <Message key={i} {...m} />)}
          <PictureBubble $tail>
            <BubbleTail />
            <Picture>
              <Logo width="34" height="17" viewBox="0 0 34 17" aria-hidden="true">
                <path fill="#4656a0" d="M0 3h18v6H0z" />
                <path fill="#0a9ddd" d="M17 1h17l-2 16H15z" />
              </Logo>
              <Receipt>
                <ReceiptCard>Anda telah<br />mengirim<br />$4,48 USD ke</ReceiptCard>
              </Receipt>
            </Picture>
          </PictureBubble>
        </Messages>
        <HeaderShade />
        <AddButton $size={120} $color="#fff" aria-label="Tambah">
          <svg width="72" height="72" viewBox="0 0 72 72" fill="#7e766f">
            <path d="M4 26L26 4M4 48l18-18M10 66l18-18M46 22L64 4M50 42l18-18M46 68l22-22" stroke="#f7f7f6" strokeWidth="3" />
            <rect x="29" width="14" height="72" rx="3" /><rect y="29" width="72" height="14" rx="3" />
          </svg>
        </AddButton>
        <DownButton $size={114} $color="#f5cf88" aria-label="Gulir ke bawah">
          <svg width="114" height="114" viewBox="0 0 114 114" fill="none" strokeWidth="10" strokeLinecap="round">
            <path stroke="#c8a96f" d="M56 16C56 28 67 26 67 36C67 48 43 44 43 55C43 65 56 62 56 72M44 76h26" />
            <path stroke="#4f5d73" d="M57 19C57 30 68 28 68 38C68 49 44.500 46 44.500 56C44.500 66 57 64 57 76" />
            <path fill="#4f5d73" d="M41 75h32q3 1 1 4L59 98q-2 2-4 0L40 79q-2-3 1-4z" />
          </svg>
        </DownButton>
        <Composer onSubmit={(e) => e.preventDefault()}>
          <Field>
            <button type="button" aria-label="Emoji">
              <svg width="60" height="60" viewBox="0 0 60 60">
                <circle cx="30" cy="30" r="27" fill="none" stroke="#000" strokeWidth="6" />
                <circle cx="19.500" cy="22.500" r="4.500" /><circle cx="40.500" cy="22.500" r="4.500" />
                <path d="M15 36h30q-4 12-15 12T15 36z" />
              </svg>
            </button>
            <Input aria-label="Ketik pesan" placeholder="Ketik pesan" />
            <FieldActions>
              <button type="button" aria-label="Lampirkan">
                <svg width="64" height="56" viewBox="0 0 64 56" fill="none" stroke="#111" strokeWidth="5.200" strokeLinecap="round">
                  <path d="M34 5.500L56 27C64 36 60 48 53 52Q44 56 36 50L5.500 20C1 15 2 8 7 5Q15 0 22 6L45 28C51 35 43 41 37 37L20 20" />
                </svg>
              </button>
              <button type="button" aria-label="Kamera">
                <svg width="59" height="55" viewBox="0 0 59 55">
                  <path fill="#050607" d="M23 0h13q3 0 5 3l2 3q1 2 4 2 12 0 12 12v24q0 11-11 11H11Q0 55 0 44V20Q0 8 12 8q3 0 4-2l2-3q2-3 5-3z" />
                  <circle cx="29.500" cy="29" r="12.300" fill="none" stroke="#fff" strokeWidth="5" />
                </svg>
              </button>
            </FieldActions>
          </Field>
          <Round type="button" $size={141} $color="#00897b" aria-label="Pesan suara">
            <svg width="44" height="61" viewBox="0 0 44 61" fill="#222">
              <rect x="13" width="18" height="36" rx="9" />
              <path d="M3 30a19 16 0 0 0 38 0M22 47v11" fill="none" stroke="#222" strokeWidth="6" strokeLinecap="round" />
            </svg>
          </Round>
        </Composer>
      </Chat>

      <NavBar>
        <button aria-label="Kembali">
          <svg width="48" height="48" viewBox="0 0 48 48" fill="#999">
            <path d="M40 .5q3-1.500 3 2v43q0 3.500-3 2L2 26q-2-2 0-4z" />
          </svg>
        </button>
        <button aria-label="Beranda">
          <svg width="42" height="42" viewBox="0 0 42 42" fill="#999"><circle cx="21" cy="21" r="21" /></svg>
        </button>
        <button aria-label="Aplikasi terbaru">
          <svg width="46" height="46" viewBox="0 0 46 46" fill="#999"><rect width="46" height="46" rx="5" /></svg>
        </button>
      </NavBar>
    </Screen>
  );
}
